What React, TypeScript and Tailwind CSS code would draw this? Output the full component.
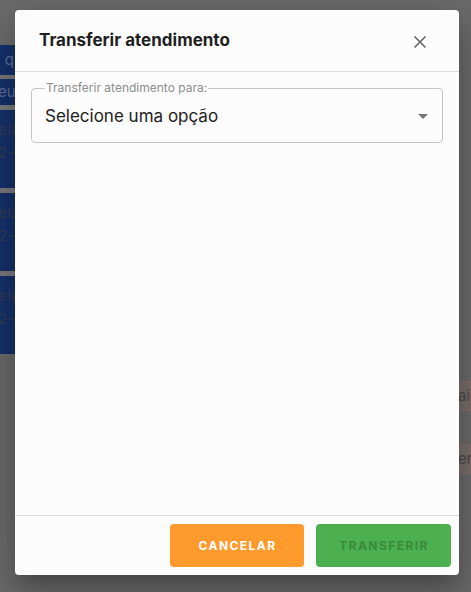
import React from "react";

const Card = () => (
  <div className="flex h-[78px] flex-col gap-[3px] whitespace-nowrap bg-[#15316b] pt-[10px] text-[15px] font-bold leading-[20px] text-[#2a3a5c]">
    <span className="-ml-[2px]">ela</span>
    <span className="-ml-[2px]">2-2</span>
  </div>
);

export default function App() {
  return (
    <div
      className="relative h-[592px] w-[471px] overflow-hidden bg-[#6b6b6b]"
      style={{ fontFamily: "Inter, 'Noto Sans', sans-serif" }}
    >
      {/* background page (dimmed) */}
      <div className="flex h-full justify-between">
        <div className="mt-[45px] flex w-[15px] flex-col self-start overflow-hidden">
          <div className="flex h-[30px] items-center whitespace-nowrap bg-[#15316b] text-[15px] text-[#5d6f9a]">
            <span className="-ml-[3px]">i q</span>
          </div>
          <div className="h-[4px] bg-[#7a7a7a]" />
          <div className="flex h-[26px] items-center whitespace-nowrap bg-[#15316b] text-[15px] text-[#5d6f9a]">
            <span className="-ml-[2px]">eu</span>
          </div>
          <div className="h-[5px] bg-[#7a7a7a]" />
          <Card />
          <div className="h-[5px] bg-[#7a7a7a]" />
          <Card />
          <div className="h-[5px] bg-[#7a7a7a]" />
          <Card />
        </div>
        <div className="mt-[381px] flex w-[12px] flex-col gap-[33px] self-start overflow-hidden">
          <div className="flex h-[30px] items-center whitespace-nowrap border border-[#8a6c6c] bg-[#776d6d] text-[15px] text-[#4a4a4a]">
            <span className="-ml-[2px]">aic</span>
          </div>
          <div className="flex h-[30px] items-center whitespace-nowrap border border-[#8a6c6c] bg-[#776d6d] text-[15px] text-[#4a4a4a]">
            <span className="-ml-[2px]">er</span>
          </div>
        </div>
      </div>

      {/* modal */}
      <div className="absolute left-[15px] top-[10px] flex h-[565px] w-[444px] flex-col rounded-[4px] bg-[#fcfcfc] shadow-[0_11px_15px_-7px_rgba(0,0,0,0.2),0_24px_38px_3px_rgba(0,0,0,0.14),0_9px_46px_8px_rgba(0,0,0,0.12)]">
        <div className="flex h-[62px] items-center justify-between border-b border-[#dcdcdc] pl-[24px] pr-[32px]">
          <h2 className="text-[17px] font-bold text-[#1f1f1f]">Transferir atendimento</h2>
          <svg width="14" height="14" viewBox="0 0 14 14" className="mt-[2px]">
            <path d="M1.5 1.5 L12.5 12.5 M12.5 1.5 L1.5 12.5" stroke="#666" strokeWidth="1.6" fill="none" />
          </svg>
        </div>
        <div className="flex-1 px-[16px] pt-[10px]">
          <fieldset className="relative h-[61px] rounded-[4px] border border-[#c4c4c4] px-[13px]">
            <legend className="px-[1px] text-[12px] leading-[12px] text-[#8c8c8c]">
              Transferir atendimento para:
            </legend>
            <div className="flex items-center justify-between pt-[10px]">
              <span className="text-[17px] text-[#222]">Selecione uma opção</span>
              <svg width="10" height="5" viewBox="0 0 10 5" className="mr-[1px]">
                <path d="M0 0 L10 0 L5 5 Z" fill="#757575" />
              </svg>
            </div>
          </fieldset>
        </div>
        <div className="flex h-[60px] items-start justify-end gap-[12px] border-t border-[#dcdcdc] pr-[8px] pt-[8px]">
          <button className="flex h-[43px] w-[134px] items-center justify-center rounded-[4px] bg-[#ff9a2c] pl-[1px] text-[12px] font-bold tracking-[0.12em] text-white">
            CANCELAR
          </button>
          <button className="flex h-[43px] w-[135px] items-center justify-center rounded-[4px] bg-[#4caf50] pl-[1px] text-[12px] font-bold tracking-[0.12em] text-[#3a8a3e]">
            TRANSFERIR
          </button>
        </div>
      </div>
    </div>
  );
}
